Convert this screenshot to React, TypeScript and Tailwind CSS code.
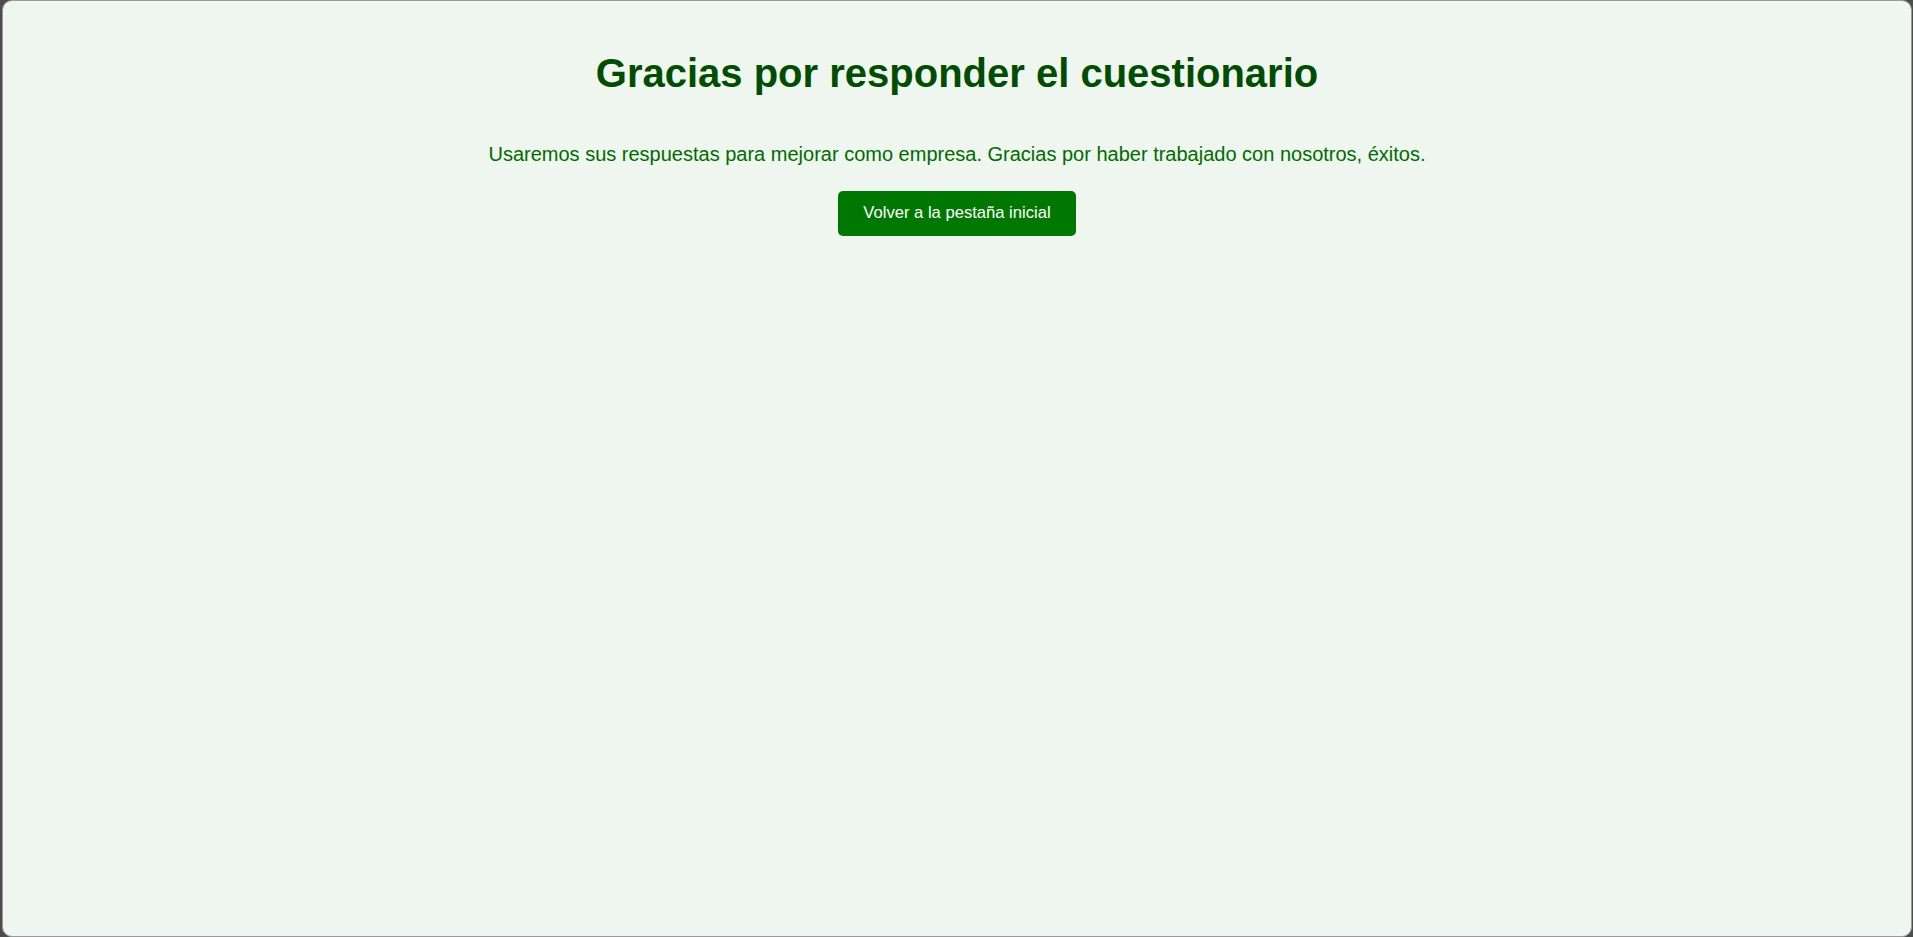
import React from "react"

const App: React.FC = () => {
  return (
    <div className="h-[937px] w-full bg-[#4d4d4d] p-0 font-['Liberation_Sans',Arial,sans-serif]">
      <div className="h-full ml-[2px] mr-[1px] rounded-[10px] border border-[#9a9a9a] bg-[#eff5ef] flex flex-col items-center">
        <h1 className="mt-[49px] text-[40px] leading-[46px] font-bold text-[#004d00]">
          Gracias por responder el cuestionario
        </h1>
        <p className="mt-[46px] text-[20px] leading-[24px] text-[#006b00]">
          Usaremos sus respuestas para mejorar como empresa. Gracias por haber trabajado con nosotros, éxitos.
        </p>
        <button className="mt-[25px] w-[238px] h-[45px] rounded-[5px] bg-[#007700] text-white text-[16.6px]">
          Volver a la pestaña inicial
        </button>
      </div>
    </div>
  )
}

export default App
